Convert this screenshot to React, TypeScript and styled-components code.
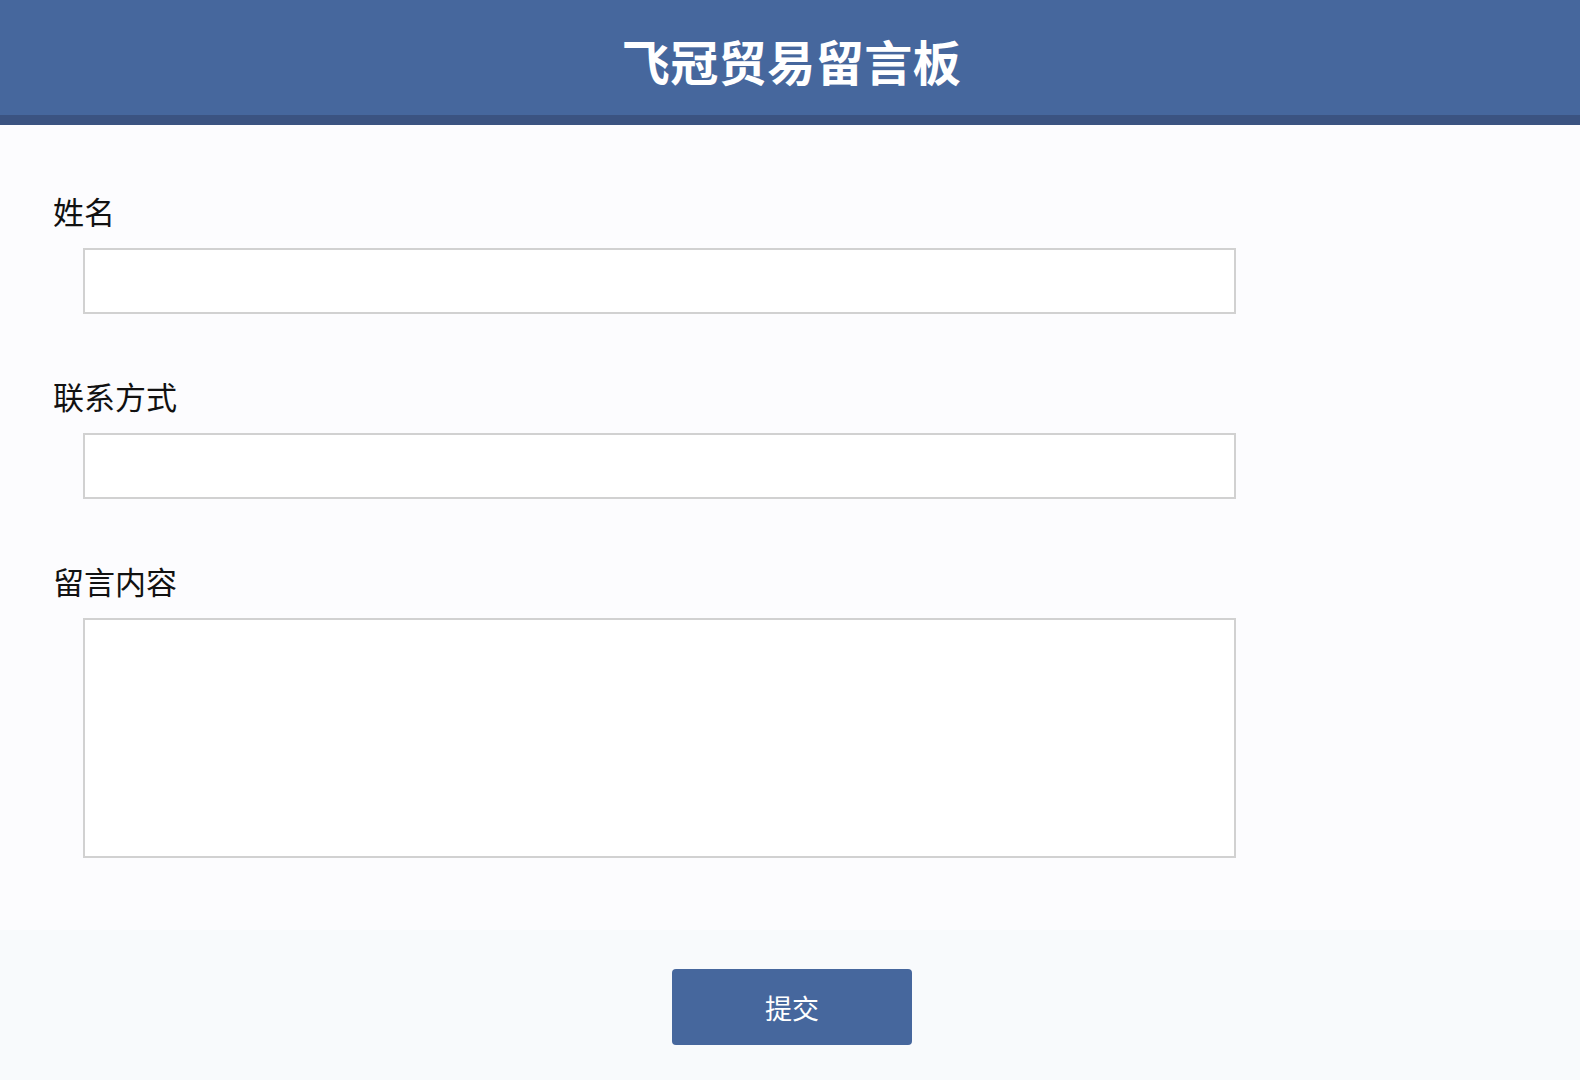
import * as React from "react";
import styled, { createGlobalStyle } from "styled-components";

const GlobalStyle = createGlobalStyle`
    html, body {
        margin: 0;
        padding: 0;
        background: #fcfcfe;
        font-family: "Noto Sans CJK SC", "Noto Sans", sans-serif;
    }
    * {
        box-sizing: border-box;
    }
`;

export const Page = styled.div`
    display: flex;
    flex-direction: column;
    min-height: 1080px;
`;

export const Header = styled.header`
    height: 125px;
    background-color: #46679d;
    border-bottom: 10px solid #3b5381;
    display: flex;
    align-items: center;
    justify-content: center;
`;

export const Title = styled.h1`
    margin: 0;
    color: #ffffff;
    font-size: 48px;
    font-weight: 700;
    letter-spacing: 0.5px;
    line-height: 1;
    padding: 5px 0 0 3px;
`;

export const Form = styled.form`
    flex: 1;
    display: flex;
    flex-direction: column;
`;

export const Fields = styled.div`
    padding: 66px 0 72px 53px;
    display: flex;
    flex-direction: column;
`;

export const Field = styled.div`
    display: flex;
    flex-direction: column;
    margin-bottom: 62px;

    &:last-child {
        margin-bottom: 0;
    }
`;

export const Label = styled.label`
    font-size: 31px;
    line-height: 40px;
    color: #111111;
    margin-bottom: 17px;
`;

export const TextInput = styled.input`
    margin-left: 30px;
    width: 1153px;
    height: 66px;
    border: 2px solid #d1d1d1;
    background: #ffffff;
    outline: none;
    font-size: 24px;
    padding: 0 12px;
`;

export const TextArea = styled.textarea`
    margin-left: 30px;
    width: 1153px;
    height: 240px;
    border: 2px solid #d1d1d1;
    background: #ffffff;
    outline: none;
    resize: none;
    font-size: 24px;
    padding: 10px 12px;
    font-family: inherit;
`;

export const Footer = styled.div`
    flex: 1;
    background: #f8fafc;
    display: flex;
    justify-content: center;
    padding: 39px 0 0 4px;
`;

export const SubmitButton = styled.button`
    width: 240px;
    height: 76px;
    border: none;
    border-radius: 4px;
    background: #46679d;
    color: #ffffff;
    font-family: inherit;
    font-size: 27px;
    cursor: pointer;
`;

export default function App() {
    return <Page>
        <GlobalStyle />
        <Header>
            <Title>飞冠贸易留言板</Title>
        </Header>
        <Form onSubmit={(e) => e.preventDefault()}>
            <Fields>
                <Field>
                    <Label htmlFor="name">姓名</Label>
                    <TextInput id="name" type="text" />
                </Field>
                <Field>
                    <Label htmlFor="contact">联系方式</Label>
                    <TextInput id="contact" type="text" />
                </Field>
                <Field>
                    <Label htmlFor="message">留言内容</Label>
                    <TextArea id="message" />
                </Field>
            </Fields>
            <Footer>
                <SubmitButton type="submit">提交</SubmitButton>
            </Footer>
        </Form>
    </Page>;
}
